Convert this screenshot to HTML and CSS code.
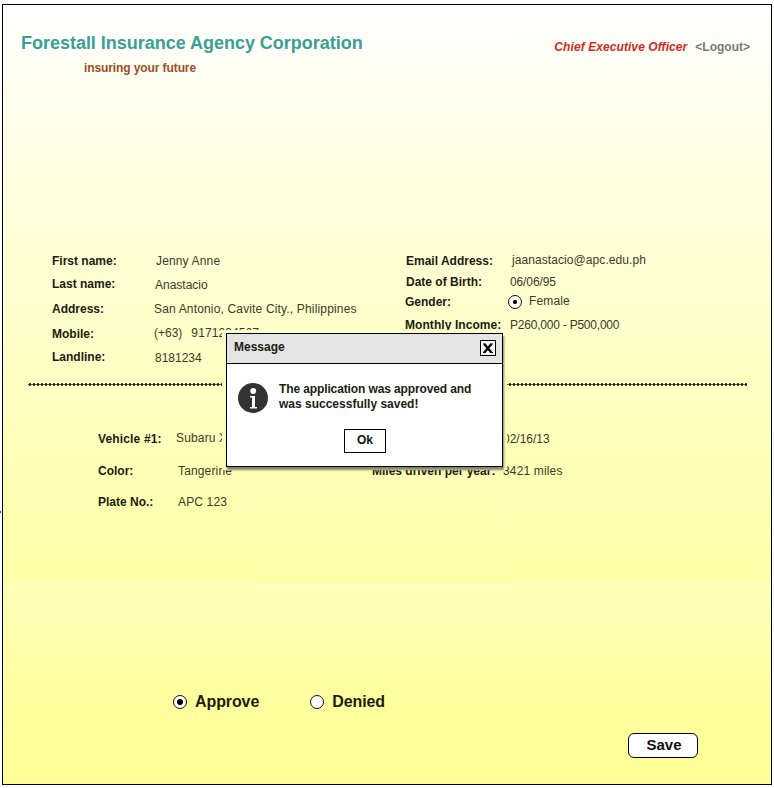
FILE: index.html
```html
<!DOCTYPE html>
<html lang="en">
<head>
<meta charset="utf-8">
<title>Forestall Insurance Agency Corporation</title>
<link rel="stylesheet" href="styles.css">
</head>
<body>
<span class="tick"></span>
<main class="page">
  <header class="header">
    <div class="brand">
      <h1 class="brand-name">Forestall Insurance Agency Corporation</h1>
      <p class="tagline">insuring your future</p>
    </div>
    <div class="account">
      <span class="role">Chief Executive Officer</span>
      <a class="logout">&lt;Logout&gt;</a>
    </div>
  </header>

  <section class="applicant">
    <div class="labels col-names">
      <span>First name:</span><span>Last name:</span><span>Address:</span><span>Mobile:</span><span>Landline:</span>
    </div>
    <div class="values col-name-values">
      <span class="in2 first">Jenny Anne</span><span class="in1">Anastacio</span><span class="address">San Antonio, Cavite City., Philippines</span><span class="mobile"><span>(+63)</span><span class="number">9171234567</span></span><span class="in1">8181234</span>
    </div>
    <div class="labels col-contact">
      <span>Email Address:</span><span>Date of Birth:</span><span>Gender:</span><span class="income">Monthly Income:</span>
    </div>
    <div class="values col-contact-values">
      <span class="in2 email">jaanastacio@apc.edu.ph</span><span class="birth">06/06/95</span><span class="gender"><i class="radio checked"></i><span class="wide">Female</span></span><span class="range">P260,000 - P500,000</span>
    </div>
  </section>

  <div class="divider"></div>

  <section class="vehicle">
    <div class="labels col-vehicle">
      <span class="wide">Vehicle #1:</span><span>Color:</span><span>Plate No.:</span>
    </div>
    <div class="values col-vehicle-values">
      <span class="wide">Subaru XV</span><span class="in2 wide">Tangerine</span><span class="in2 wide">APC 123</span>
    </div>
    <div class="labels col-usage"><span>Miles driven per year:</span></div>
    <div class="values col-usage-values">
      <span>02/16/13</span><span class="wide">3421 miles</span>
    </div>
  </section>

  <section class="decision">
    <label class="option"><i class="radio checked big"></i><span>Approve</span></label>
    <label class="option"><i class="radio"></i><span>Denied</span></label>
  </section>
  <div class="actions"><button class="save">Save</button></div>
</main>

<div class="overlay">
  <div class="dialog">
    <div class="dialog-bar">
      <span class="dialog-title">Message</span>
      <svg class="close" viewBox="0 0 16 16"><rect x=".5" y=".5" width="15" height="15" fill="#f4f4f4" stroke="#000"/><path d="M4.3 4 11.4 12.5M11.4 4 4.3 12.5" stroke="#000" stroke-width="2.3"/><path d="M3 4h2.5M10.5 4h2.5M3 12.5h2.5M10.5 12.5h2.5" stroke="#000" stroke-width="1"/></svg>
    </div>
    <div class="dialog-body">
      <svg class="info" viewBox="0 0 30 30"><circle cx="15" cy="15" r="15" fill="#333"/><circle cx="15.2" cy="8" r="3" fill="#fff"/><path d="M12 13h5v11h2v1.4h-7V24h2v-9.6h-2z" fill="#fff"/></svg>
      <p class="message">The application was approved and<br><span class="result">was successfully saved!</span></p>
    </div>
    <button class="ok">Ok</button>
  </div>
</div>
</body>
</html>
```
FILE: styles.css
```css
* { box-sizing: border-box; }
:root {
  --paper: linear-gradient(to bottom, #fff 5px, #ffffef 96px, #ffffd6 245px, #ffffc4 380px, #ffffb1 505px, #ffffa7 582px, #ffffba 583px, #ffffa8 655px, #ffff9a 730px, #ffff99 784px);
}
body {
  margin: 0;
  width: 774px;
  height: 788px;
  overflow: hidden;
  background: #fff;
  font: 12px/14px "Liberation Sans", Arial, sans-serif;
  color: #1c1c10;
}
h1, p { margin: 0; }
span { white-space: nowrap; }
.page {
  width: 770px;
  height: 781px;
  margin: 4px 0 0 2px;
  border: 1px solid #000;
  background: var(--paper) fixed;
}
.tick { position: absolute; left: 0; top: 511px; width: 1px; height: 2px; background: #444; }

.header { display: flex; justify-content: space-between; height: 249px; padding: 28px 21px 0 18px; }
.brand-name { font-size: 18px; line-height: 20px; letter-spacing: -.02px; color: #39a096; }
.tagline { margin: 8px 0 0 63px; font-weight: bold; letter-spacing: -.1px; color: #9c4e24; }
.account { display: flex; gap: 8px; padding-top: 7px; font-weight: bold; }
.role { font-style: italic; letter-spacing: .08px; color: #d42a26; }
.logout { color: #7a7a74; }

.applicant, .vehicle { display: flex; }
.applicant { height: 125px; padding-left: 49px; }
.labels, .values { display: grid; align-content: start; flex: none; }
.labels { font-weight: bold; }
.values { color: #3a3a28; }
.in1 { padding-left: 1px; }
.in2 { padding-left: 2px; }
.wide, .first { letter-spacing: .15px; }
.address { letter-spacing: .16px; }
.number { letter-spacing: .1px; }
.email { letter-spacing: .08px; }
.birth { letter-spacing: -.12px; }
.range { letter-spacing: -.22px; }
.col-names { width: 102px; grid-template-rows: 23px 25px 25px 23px 14px; }
.col-name-values { width: 252px; grid-template-rows: 24px 24px 24px 25px 14px; }
.mobile { display: flex; gap: 9px; }
.col-contact { width: 104px; grid-template-rows: 21px 21px 22px 14px; }
.col-contact > :nth-child(3) { margin: -1px 0 0 -1px; }
.income { margin-left: -1px; letter-spacing: .07px; }
.col-contact-values { margin-top: -1px; grid-template-rows: 22px 19px 24px 14px; }
.gender { display: flex; gap: 7px; margin-left: -2px; }

.radio { flex: none; width: 14px; height: 14px; border: 1.5px solid #111; border-radius: 50%; background: #fff; }
.checked { background: radial-gradient(circle, #000 1.7px, #fff 2.4px); }
.checked.big { background: radial-gradient(circle, #000 2.6px, #fff 3.5px); }
.gender .radio { margin-top: 1px; }

.divider {
  width: 719px;
  height: 3px;
  margin: 4px 0 0 25px;
  background: radial-gradient(ellipse 1.9px 1.4px at 2px 1.5px, #1a1a0c 70%, transparent 100%) 0 0 / 4px 3px repeat-x;
}
.vehicle { height: 250px; padding: 45px 0 0 95px; }
.col-vehicle { width: 78px; margin-top: 1px; grid-template-rows: 32px 31px 14px; }
.col-vehicle-values { width: 196px; grid-template-rows: 33px 31px 14px; }
.col-usage { width: 131px; padding-top: 33px; }
.col-usage-values { margin-top: 1px; grid-template-rows: 32px 14px; }

.decision { display: flex; gap: 51px; height: 20px; margin: 56px 0 0 170px; font-size: 16px; line-height: 20px; font-weight: bold; letter-spacing: -.1px; }
.option { display: flex; gap: 8px; align-items: center; }
.actions { display: flex; justify-content: flex-end; padding: 21px 73px 0 0; }
button { padding: 0; border: 1px solid #000; background: #fff; color: #111; font: bold 12px "Liberation Sans", Arial, sans-serif; }
.save { width: 70px; height: 25px; padding: 0 0 2px 2px; border-radius: 6px; font-size: 15px; }

.overlay {
  position: absolute;
  left: 222px;
  top: 330px;
  width: 285px;
  height: 140px;
  padding: 3px 4px 0 4px;
  background: var(--paper) fixed;
}
.dialog {
  display: flex;
  flex-direction: column;
  width: 277px;
  height: 134px;
  border: 1px solid #000;
  background: #fff;
  box-shadow: 1px 3px 2px #82826a;
  font-weight: bold;
}
.dialog-bar { display: flex; justify-content: space-between; height: 30px; padding: 6px 6px 0 7px; border-bottom: 1px solid #000; background: #e4e4e4; }
.close { width: 16px; height: 16px; }
.dialog-body { display: flex; gap: 11px; height: 65px; padding: 19px 0 0 11px; }
.info { flex: none; width: 30px; height: 30px; }
.message { margin-top: -1px; line-height: 15px; letter-spacing: -.12px; white-space: nowrap; }
.result { letter-spacing: 0; }
.ok { width: 42px; height: 24px; margin-left: 117px; padding-bottom: 2px; }
```
